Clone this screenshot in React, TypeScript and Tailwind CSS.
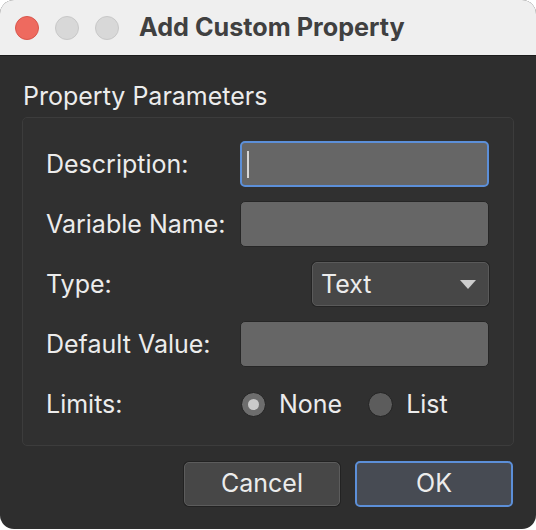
import { useState } from "react";

// Dark-mode "Add Custom Property" sheet with a form group and two buttons
const labelClass = "text-[25px] text-[#ececec] leading-none";

const Field = ({ focused = false }: { focused?: boolean }) => (
  <div
    className={`relative h-[46px] w-[249px] rounded-[5px] bg-[#666666] ${
      focused
        ? "border-2 border-[#5c8fd8]"
        : "border border-[#262626]"
    }`}
  >
    {focused && (
      <span className="absolute left-[5px] top-[8px] h-[27px] w-[2px] bg-[#d6d6d6]" />
    )}
  </div>
);

const Radio = ({ checked, label }: { checked: boolean; label: string }) => (
  <label className="flex items-center gap-[13px]">
    <span
      className={`flex h-[25px] w-[25px] items-center justify-center rounded-full border border-[#222222] ${
        checked ? "bg-[#6d6d6d]" : "bg-[#5c5c5c]"
      }`}
    >
      {checked && <span className="h-[11px] w-[11px] rounded-full bg-[#c9c9c9]" />}
    </span>
    <span className={labelClass}>{label}</span>
  </label>
);

export default function App() {
  const [limit] = useState<"none" | "list">("none");

  return (
    <div
      className="h-[530px] w-[536px] bg-white"
      style={{ fontFamily: "Inter, 'Liberation Sans', sans-serif" }}
    >
      <div className="flex h-[529px] w-[536px] flex-col overflow-hidden rounded-[14px] bg-[#2e2e2e]">
        {/* title bar */}
        <div className="flex h-[56px] shrink-0 items-center border-b border-[#1c1c1c] bg-[#efefef] pl-[15px]">
          <div className="flex gap-[16px]">
            <span className="h-[24px] w-[24px] rounded-full border border-[#d9564c] bg-[#ee6a5f]" />
            <span className="h-[24px] w-[24px] rounded-full border border-[#c8c8c8] bg-[#d8d8d8]" />
            <span className="h-[24px] w-[24px] rounded-full border border-[#c8c8c8] bg-[#d8d8d8]" />
          </div>
          <h1 className="ml-[20px] text-[25.2px] font-bold text-[#404040]">
            Add Custom Property
          </h1>
        </div>

        <div className="flex flex-col px-[22px] pt-[28px]">
          <div className="pl-[1px] text-[25px] leading-none text-[#ececec]">
            Property Parameters
          </div>

          {/* parameter group */}
          <div className="mt-[8px] flex flex-col rounded-[5px] border border-[#3c3c3c] bg-[#303030] pb-[11px] pl-[23px] pr-[24px] pt-[16px]">
            <div className="flex h-[60px] items-center justify-between">
              <span className={labelClass}>Description:</span>
              <Field focused />
            </div>
            <div className="flex h-[60px] items-center justify-between">
              <span className={labelClass}>Variable Name:</span>
              <Field />
            </div>
            <div className="flex h-[60px] items-center justify-between">
              <span className={labelClass}>Type:</span>
              <div className="flex h-[44px] w-[177px] items-center justify-between rounded-[5px] border border-[#5a5a5a] bg-[#474747] pl-[8px] pr-[12px] shadow-[0_0_0_1px_#242424]">
                <span className={labelClass}>Text</span>
                <svg width="16" height="9" viewBox="0 0 16 9">
                  <path d="M0 0 H16 L8 9 Z" fill="#cdcdcd" />
                </svg>
              </div>
            </div>
            <div className="flex h-[60px] items-center justify-between">
              <span className={labelClass}>Default Value:</span>
              <Field />
            </div>
            <div className="flex h-[60px] items-center">
              <span className={`${labelClass} w-[195px]`}>Limits:</span>
              <div className="flex items-center gap-[26px]">
                <Radio checked={limit === "none"} label="None" />
                <Radio checked={limit === "list"} label="List" />
              </div>
            </div>
          </div>

          {/* buttons */}
          <div className="mt-[15px] flex justify-end gap-[15px] pr-[1px]">
            <button className="mt-[1px] h-[44px] w-[156px] rounded-[5px] border border-[#5c5c5c] bg-[#474747] text-[25px] text-[#ececec] shadow-[0_0_0_1px_#222222]">
              Cancel
            </button>
            <button className="h-[46px] w-[158px] rounded-[5px] border-2 border-[#5c8fd8] bg-[#474b53] text-[25px] text-[#ececec]">
              OK
            </button>
          </div>
        </div>
      </div>
    </div>
  );
}
